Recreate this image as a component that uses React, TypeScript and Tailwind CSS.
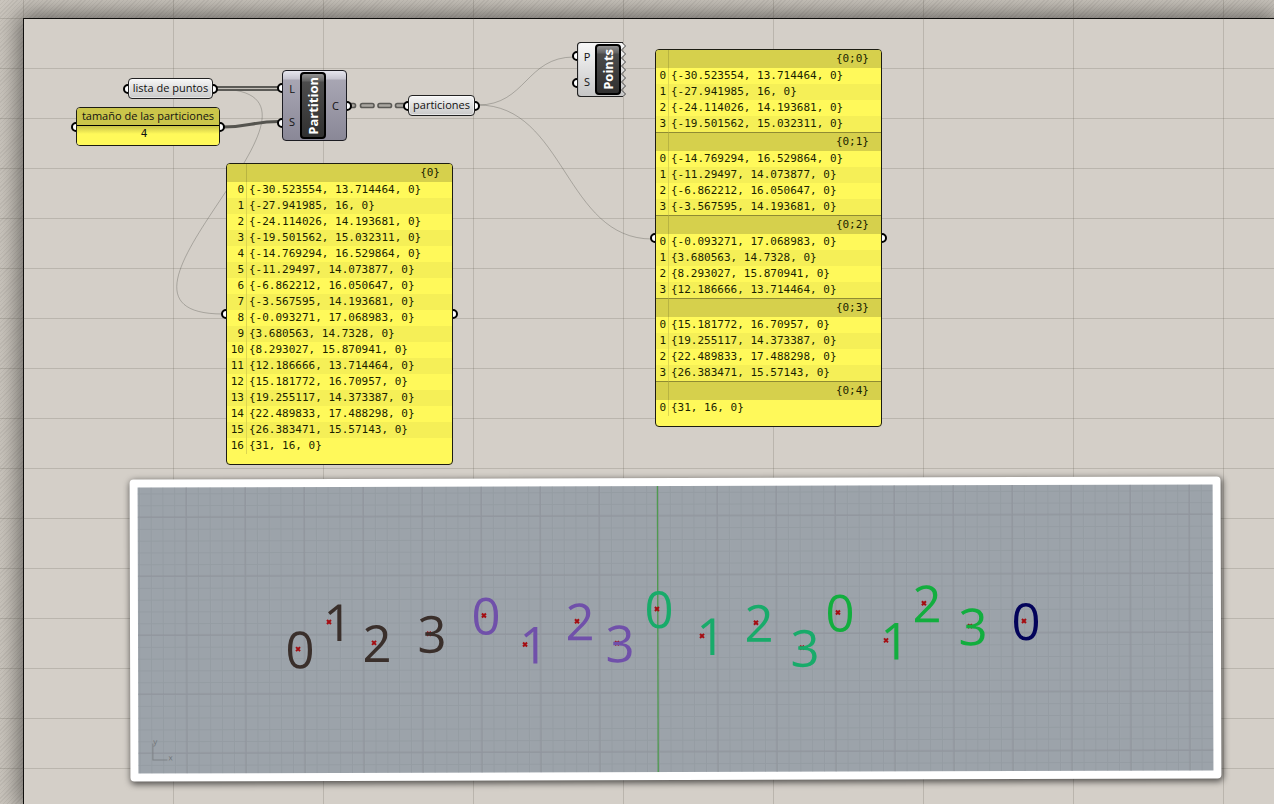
import type { ReactNode } from "react";

const coordinates = [
  "{-30.523554, 13.714464, 0}",
  "{-27.941985, 16, 0}",
  "{-24.114026, 14.193681, 0}",
  "{-19.501562, 15.032311, 0}",
  "{-14.769294, 16.529864, 0}",
  "{-11.29497, 14.073877, 0}",
  "{-6.862212, 16.050647, 0}",
  "{-3.567595, 14.193681, 0}",
  "{-0.093271, 17.068983, 0}",
  "{3.680563, 14.7328, 0}",
  "{8.293027, 15.870941, 0}",
  "{12.186666, 13.714464, 0}",
  "{15.181772, 16.70957, 0}",
  "{19.255117, 14.373387, 0}",
  "{22.489833, 17.488298, 0}",
  "{26.383471, 15.57143, 0}",
  "{31, 16, 0}",
];

type Branch = { path: string; items: string[] };

const flatBranches: Branch[] = [{ path: "{0}", items: coordinates }];

const partitionBranches: Branch[] = [0, 1, 2, 3, 4].map((i) => ({
  path: `{0;${i}}`,
  items: coordinates.slice(i * 4, i * 4 + 4),
}));

function Grip() {
  return <span className="block size-[10px] rounded-full border-2 border-black bg-white" />;
}

/* A node on the canvas, with its input grips on the left edge and its outputs on the right. */
function Node({
  className,
  inputs = 1,
  outputs = 1,
  children,
}: {
  className: string;
  inputs?: number;
  outputs?: number;
  children: ReactNode;
}) {
  return (
    <section className={`absolute isolate ${className}`}>
      <div className="absolute inset-y-0 -inset-x-[5px] -z-10 flex justify-between">
        <div className="flex flex-col justify-around">
          {Array.from({ length: inputs }, (_, i) => (
            <Grip key={i} />
          ))}
        </div>
        <div className="flex flex-col justify-around">
          {Array.from({ length: outputs }, (_, i) => (
            <Grip key={i} />
          ))}
        </div>
      </div>
      {children}
    </section>
  );
}

function ParamNode({ label, className }: { label: string; className: string }) {
  return (
    <Node className={className}>
      <div className="rounded-[4px] border border-[#222] bg-linear-to-b from-[#f6f6f6] to-[#c9c9c9] pb-[2px] text-center text-[11px] leading-[17px] whitespace-nowrap shadow-[inset_0_0_0_1px_rgba(255,255,255,0.5)]">
        {label}
      </div>
    </Node>
  );
}

function NamePlate({ name }: { name: string }) {
  return (
    <div className="flex w-[26px] items-center justify-center rounded-[4px] border-2 border-black bg-[linear-gradient(#929292,#626262_7px,#4c4c4c_8px,#303030)]">
      <span className="rotate-180 text-[13px] leading-[22px] font-bold text-white [writing-mode:vertical-rl]">
        {name}
      </span>
    </div>
  );
}

function DataPanel({
  branches,
  className,
  indexClass,
}: {
  branches: Branch[];
  className: string;
  indexClass: string;
}) {
  return (
    <Node className={className}>
      <div className="overflow-hidden rounded-[4px] border border-[#1c1c12] bg-[#fff95a] pb-[10px]">
        <table className="w-full table-fixed border-separate border-spacing-0 font-['DejaVu_Sans_Mono',monospace] text-[11px] leading-4 text-[#1a1f00]">
          <colgroup>
            <col className={indexClass} />
            <col />
          </colgroup>
          {branches.map((branch, b) => (
            <tbody key={branch.path}>
              <tr
                className={
                  b === 0
                    ? "bg-[#d6d04c] [&>*]:h-[18px]"
                    : "bg-[#d6d04c] [&>*]:h-[19px] [&>*]:border-t [&>*]:border-t-[#8f8b33]"
                }
              >
                <td className="border-r border-r-[#b9b441] p-0" />
                <th scope="rowgroup" className="p-0 pr-3 text-right align-top leading-[17px] font-normal">
                  {branch.path}
                </th>
              </tr>
              {branch.items.map((item, i) => (
                <tr key={item} className="odd:bg-[#f5ef57] even:bg-[#fff95a]">
                  <td className="h-4 border-r border-r-[#dcd650] p-0 pr-[2px] text-right align-top">{i}</td>
                  <td className="h-4 p-0 pl-[2px] align-top whitespace-nowrap">{item}</td>
                </tr>
              ))}
            </tbody>
          ))}
        </table>
      </div>
    </Node>
  );
}

function Wires() {
  return (
    <svg className="absolute top-0 left-0" width="900" height="400" fill="none" aria-hidden="true">
      <g stroke="#4f4e4a" strokeOpacity="0.34">
        <path d="M217 89C372 89 66 314 223 314" />
        <path d="M478 105C526 105 526 57 574 57" />
        <path d="M478 105C565 105 565 239 652 239" />
      </g>
      <path d="M217 88.500H279" stroke="#5b5a56" strokeWidth="5" />
      <path d="M217 88.500H279" stroke="#c4c0b9" strokeWidth="1.200" />
      <path d="M223 127C250 127 252 121.500 279 121.500" stroke="#55544f" strokeWidth="3" />
      <g stroke="#5b5a56" strokeWidth="1.600" fill="#aaa7a1">
        <rect x="345" y="103.500" width="10.500" height="4" rx="1.800" />
        <rect x="360.500" y="103.500" width="13.500" height="4" rx="1.800" />
        <rect x="378" y="103.500" width="13.500" height="4" rx="1.800" />
        <rect x="395.500" y="103.500" width="13" height="4" rx="1.800" />
      </g>
    </svg>
  );
}

const ink = {
  brown: "#3a2f2b",
  purple: "#7050aa",
  teal: "#18ab6a",
  green: "#12ae3e",
  navy: "#03035a",
};

const markers: { x: number; y: number; n: number; color: string }[] = [
  { x: 160, y: 162, n: 0, color: ink.brown },
  { x: 191, y: 135, n: 1, color: ink.brown },
  { x: 236, y: 156, n: 2, color: ink.brown },
  { x: 291, y: 147, n: 3, color: ink.brown },
  { x: 346, y: 129, n: 0, color: ink.purple },
  { x: 387, y: 158, n: 1, color: ink.purple },
  { x: 439, y: 135, n: 2, color: ink.purple },
  { x: 479, y: 157, n: 3, color: ink.purple },
  { x: 519, y: 123, n: 0, color: ink.teal },
  { x: 564, y: 150, n: 1, color: ink.teal },
  { x: 618, y: 137, n: 2, color: ink.teal },
  { x: 664, y: 162, n: 3, color: ink.teal },
  { x: 700, y: 127, n: 0, color: ink.green },
  { x: 748, y: 155, n: 1, color: ink.green },
  { x: 786, y: 118, n: 2, color: ink.green },
  { x: 832, y: 141, n: 3, color: ink.green },
  { x: 886, y: 136, n: 0, color: ink.navy },
];

const digitShift = [2, 9, 3, 3];

function Viewport() {
  return (
    <figure className="absolute top-[478px] left-[130px] -rotate-[0.17deg] rounded-[4px] border-8 border-white bg-[#9ca3aa] shadow-[1px_2px_6px_1px_rgba(0,0,0,0.6)]">
      <svg className="block" width="1075" height="286" role="img" aria-label="Puntos numerados">
        <defs>
          <pattern id="minor" x="48.400" y="29.500" width="11.800" height="11.800" patternUnits="userSpaceOnUse">
            <path d="M0 0.500H11.800M0.500 0V11.800" stroke="#8e959c" strokeOpacity="0.5" />
          </pattern>
          <pattern id="major" x="47.400" y="28.500" width="59" height="59" patternUnits="userSpaceOnUse">
            <path d="M0 1H59M1 0V59" stroke="#8b8d97" strokeOpacity="0.5" strokeWidth="1.500" />
          </pattern>
        </defs>
        <rect width="1075" height="286" fill="url(#minor)" />
        <rect width="1075" height="286" fill="url(#major)" />
        <path d="M519.800 0V286" stroke="#4f9a50" strokeWidth="1.300" />
        <path d="M14.500 256V272.500H29" fill="none" stroke="#7d8185" />
        <g fill="#6f7377" fontSize="8" fontFamily="Open Sans, sans-serif">
          <text x="15" y="257">y</text>
          <text x="30" y="273">x</text>
        </g>
        {markers.map((m) => (
          <g key={m.x}>
            <path d={`M${m.x - 2} ${m.y - 2}l4 4m0 -4l-4 4`} stroke="#a50d12" strokeWidth="2" />
            <text
              x={m.x + digitShift[m.n]}
              y={m.y + 19}
              textAnchor="middle"
              fontSize="51"
              fontFamily="Open Sans, sans-serif"
              fill={m.color}
            >
              {m.n}
            </text>
          </g>
        ))}
      </svg>
    </figure>
  );
}

export default function App() {
  return (
    <main className="relative isolate flex min-h-screen overflow-hidden bg-[#cbc6be] bg-[repeating-linear-gradient(135deg,rgba(0,0,0,0.05)_0_1px,transparent_1px_3px)] pt-[18px] pl-[23px] font-['Open_Sans',sans-serif] text-[#111]">
      <div className="flex-1 border-t border-l border-black bg-[#d4cfc8] shadow-[0_0_22px_4px_rgba(0,0,0,0.5)]" />
      <div className="absolute inset-0 bg-[linear-gradient(rgba(80,76,66,0.2)_1px,transparent_1px),linear-gradient(90deg,rgba(80,76,66,0.2)_1px,transparent_1px)] bg-[size:150px_50px] bg-position-[23px_18px]" />
      <Wires />

      <ParamNode label="lista de puntos" className="top-[78px] left-[128px] w-[85px]" />

      <Node className="top-[107px] left-[76px] w-[144px]">
        <div className="overflow-hidden rounded-[4px] border border-[#1c1c12] text-center">
          <h2 className="border-b border-black bg-[#cbc54a] pb-[2px] text-[11px] leading-[15px] whitespace-nowrap">
            tamaño de las particiones
          </h2>
          <p className="bg-[linear-gradient(#c9c348,#fff95a_8px)] pr-2 pb-[3px] font-['DejaVu_Sans_Mono',monospace] text-[11px] leading-4">
            4
          </p>
        </div>
      </Node>

      <Node className="top-[70px] left-[282px] w-[65px]" inputs={2}>
        <div className="flex h-[71px] rounded-[4px] border border-[#1c1c22] bg-[linear-gradient(#e6e6ee,#c6c5d0_8px,#a8a6b3_9px,#8a8897)] p-px text-[11px]">
          <div className="flex w-4 flex-col justify-around text-center leading-4">
            <span>L</span>
            <span>S</span>
          </div>
          <NamePlate name="Partition" />
          <span className="flex-1 self-center text-center leading-4">C</span>
        </div>
      </Node>

      <ParamNode label="particiones" className="top-[95px] left-[408px] w-[67px]" />

      <Node className="top-[42px] left-[577px] w-[49px]" inputs={2} outputs={0}>
        <svg className="absolute inset-0 -z-10" width="50" height="55" aria-hidden="true">
          <defs>
            <linearGradient id="shell" x2="0" y2="1">
              <stop stopColor="#f8f8f8" />
              <stop offset="1" stopColor="#c6c6c6" />
            </linearGradient>
          </defs>
          <path
            d="M44.500 0.500H4Q0.500 0.500 0.500 4V51Q0.500 54.500 4 54.500H46L48.500 52L44.500 48L48.500 44L44.500 40L48.500 36L44.500 32L48.500 28L44.500 24L48.500 20L44.500 16L48.500 12L44.500 8L48.500 4Z"
            fill="url(#shell)"
          />
          <path d="M46 0.500H4Q0.500 0.500 0.500 4V51Q0.500 54.500 4 54.500H46" fill="none" stroke="#222" strokeWidth="1.200" />
          <path
            d="M45 0.500L48.500 4L44.500 8L48.500 12L44.500 16L48.500 20L44.500 24L48.500 28L44.500 32L48.500 36L44.500 40L48.500 44L44.500 48L48.500 52L46 54.500"
            fill="none"
            stroke="#444"
          />
        </svg>
        <div className="flex h-[55px] p-[2px] text-[11px]">
          <div className="flex w-4 flex-col justify-around text-center leading-4">
            <span>P</span>
            <span>S</span>
          </div>
          <NamePlate name="Points" />
        </div>
      </Node>

      <DataPanel branches={flatBranches} className="top-[163px] left-[226px] w-[227px]" indexClass="w-5" />
      <DataPanel branches={partitionBranches} className="top-[49px] left-[655px] w-[227px]" indexClass="w-[13px]" />

      <Viewport />
    </main>
  );
}
